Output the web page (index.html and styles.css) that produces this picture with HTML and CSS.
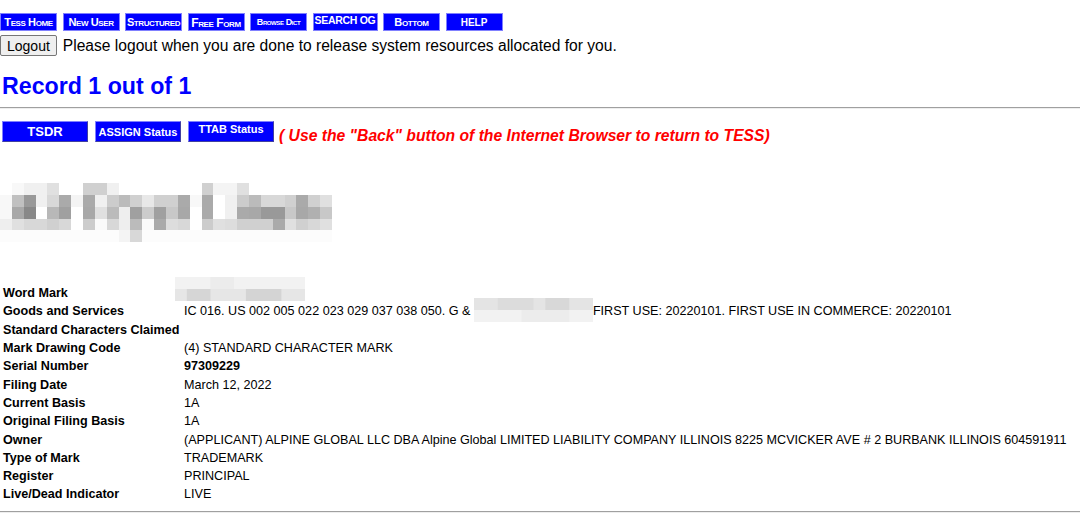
FILE: index.html
```html
<!DOCTYPE html>
<html lang="en">
<head>
    <meta charset="UTF-8">
    <title>Trademark Electronic Search System (TESS)</title>
    <link rel="stylesheet" href="styles.css">
</head>
<body>
    <div class="nav">
        <a class="navbtn" href="#">Tess Home</a>
        <a class="navbtn" href="#">New User</a>
        <a class="navbtn" href="#">Structured</a>
        <a class="navbtn big" href="#">Free Form</a>
        <a class="navbtn small" href="#">Browse Dict</a>
        <a class="navbtn plain wide" href="#">SEARCH OG</a>
        <a class="navbtn" href="#">Bottom</a>
        <a class="navbtn plain" href="#">HELP</a>
    </div>
    <div class="logout-row">
        <button class="logout">Logout</button>
        <span>Please logout when you are done to release system resources allocated for you.</span>
    </div>

    <h1 class="record">Record 1 out of 1</h1>
    <hr>

    <div class="status-row">
        <a class="statbtn tsdr" href="#">TSDR</a>
        <a class="statbtn" href="#">ASSIGN Status</a>
        <a class="statbtn ttab" href="#">TTAB Status</a>
        <span class="back-note">( Use the "Back" button of the Internet Browser to return to TESS)</span>
    </div>

    <div class="mark-image">
        <svg width="332" height="64" viewBox="0 0 28 5.4" preserveAspectRatio="none" shape-rendering="crispEdges">
            <g id="r0">
                <rect x="1" y="0" width="1" height="1" fill="#f8f8f8"/>
                <rect x="2" y="0" width="2" height="1" fill="#f0f0f0"/>
                <rect x="4" y="0" width="1" height="1" fill="#e0e0e0"/>
                <rect x="7" y="0" width="2" height="1" fill="#d0d0d0"/>
                <rect x="9" y="0" width="1" height="1" fill="#f0f0f0"/>
                <rect x="17" y="0" width="1" height="1" fill="#d0d0d0"/>
                <rect x="18" y="0" width="2" height="1" fill="#f4f4f4"/>
                <rect x="20" y="0" width="1" height="1" fill="#e0e0e0"/>
            </g>
            <g id="r1">
                <rect x="0" y="1" width="1" height="1" fill="#f8f8f8"/>
                <rect x="1" y="1" width="1" height="1" fill="#c0c0c0"/>
                <rect x="2" y="1" width="1" height="1" fill="#999999"/>
                <rect x="3" y="1" width="1" height="1" fill="#f0f0f0"/>
                <rect x="4" y="1" width="1" height="1" fill="#d8d8d8"/>
                <rect x="5" y="1" width="1" height="1" fill="#aaaaaa"/>
                <rect x="6" y="1" width="1" height="1" fill="#f4f4f4"/>
                <rect x="7" y="1" width="1" height="1" fill="#aaaaaa"/>
                <rect x="8" y="1" width="1" height="1" fill="#f0f0f0"/>
                <rect x="9" y="1" width="1" height="1" fill="#cccccc"/>
                <rect x="10" y="1" width="1" height="1" fill="#bbbbbb"/>
                <rect x="11" y="1" width="1" height="1" fill="#d0d0d0"/>
                <rect x="12" y="1" width="1" height="1" fill="#e8e8e8"/>
                <rect x="13" y="1" width="2" height="1" fill="#d0d0d0"/>
                <rect x="15" y="1" width="1" height="1" fill="#aaaaaa"/>
                <rect x="16" y="1" width="1" height="1" fill="#f8f8f8"/>
                <rect x="17" y="1" width="1" height="1" fill="#aaaaaa"/>
                <rect x="19" y="1" width="1" height="1" fill="#f0f0f0"/>
                <rect x="20" y="1" width="1" height="1" fill="#cccccc"/>
                <rect x="21" y="1" width="1" height="1" fill="#bbbbbb"/>
                <rect x="22" y="1" width="2" height="1" fill="#d8d8d8"/>
                <rect x="24" y="1" width="1" height="1" fill="#d0d0d0"/>
                <rect x="25" y="1" width="1" height="1" fill="#aaaaaa"/>
                <rect x="26" y="1" width="1" height="1" fill="#d0d0d0"/>
                <rect x="27" y="1" width="1" height="1" fill="#e0e0e0"/>
            </g>
            <g id="r2">
                <rect x="0" y="2" width="1" height="1" fill="#f8f8f8"/>
                <rect x="1" y="2" width="1" height="1" fill="#a8a8a8"/>
                <rect x="2" y="2" width="1" height="1" fill="#888888"/>
                <rect x="4" y="2" width="1" height="1" fill="#b8b8b8"/>
                <rect x="5" y="2" width="1" height="1" fill="#a0a0a0"/>
                <rect x="7" y="2" width="1" height="1" fill="#a8a8a8"/>
                <rect x="8" y="2" width="1" height="1" fill="#e0e0e0"/>
                <rect x="9" y="2" width="1" height="1" fill="#bbbbbb"/>
                <rect x="10" y="2" width="1" height="1" fill="#eeeeee"/>
                <rect x="11" y="2" width="1" height="1" fill="#a0a0a0"/>
                <rect x="12" y="2" width="1" height="1" fill="#cccccc"/>
                <rect x="13" y="2" width="1" height="1" fill="#a0a0a0"/>
                <rect x="14" y="2" width="1" height="1" fill="#c8c8c8"/>
                <rect x="15" y="2" width="1" height="1" fill="#a8a8a8"/>
                <rect x="17" y="2" width="1" height="1" fill="#aaaaaa"/>
                <rect x="19" y="2" width="1" height="1" fill="#f0f0f0"/>
                <rect x="20" y="2" width="1" height="1" fill="#aaaaaa"/>
                <rect x="21" y="2" width="1" height="1" fill="#a8a8a8"/>
                <rect x="22" y="2" width="2" height="1" fill="#999999"/>
                <rect x="24" y="2" width="1" height="1" fill="#c8c8c8"/>
                <rect x="25" y="2" width="1" height="1" fill="#a8a8a8"/>
                <rect x="26" y="2" width="1" height="1" fill="#b0b0b0"/>
                <rect x="27" y="2" width="1" height="1" fill="#c8c8c8"/>
            </g>
            <g id="r3">
                <rect x="0" y="3" width="1" height="1" fill="#eeeeee"/>
                <rect x="1" y="3" width="1" height="1" fill="#e0e0e0"/>
                <rect x="2" y="3" width="2" height="1" fill="#d8d8d8"/>
                <rect x="4" y="3" width="1" height="1" fill="#d0d0d0"/>
                <rect x="5" y="3" width="1" height="1" fill="#d8d8d8"/>
                <rect x="7" y="3" width="1" height="1" fill="#cccccc"/>
                <rect x="8" y="3" width="1" height="1" fill="#fafafa"/>
                <rect x="9" y="3" width="1" height="1" fill="#d8d8d8"/>
                <rect x="10" y="3" width="1" height="1" fill="#eeeeee"/>
                <rect x="11" y="3" width="1" height="1" fill="#bbbbbb"/>
                <rect x="12" y="3" width="1" height="1" fill="#fafafa"/>
                <rect x="13" y="3" width="1" height="1" fill="#aaaaaa"/>
                <rect x="14" y="3" width="1" height="1" fill="#dddddd"/>
                <rect x="15" y="3" width="1" height="1" fill="#d8d8d8"/>
                <rect x="17" y="3" width="1" height="1" fill="#cccccc"/>
                <rect x="18" y="3" width="1" height="1" fill="#e0e0e0"/>
                <rect x="19" y="3" width="1" height="1" fill="#dddddd"/>
                <rect x="20" y="3" width="3" height="1" fill="#d0d0d0"/>
                <rect x="23" y="3" width="1" height="1" fill="#aaaaaa"/>
                <rect x="24" y="3" width="1" height="1" fill="#e0e0e0"/>
                <rect x="25" y="3" width="1" height="1" fill="#d0d0d0"/>
                <rect x="26" y="3" width="1" height="1" fill="#d8d8d8"/>
                <rect x="27" y="3" width="1" height="1" fill="#e0e0e0"/>
            </g>
            <g id="r4">
                <rect x="0" y="4" width="28" height="1" fill="#fcfcfc"/>
                <rect x="10" y="4" width="1" height="1" fill="#f4f4f4"/>
                <rect x="11" y="4" width="1" height="1" fill="#d8d8d8"/>
            </g>
        </svg>
    </div>

    <table class="details">
        <tr>
            <td class="label">Word Mark</td>
            <td>
                <svg class="smudge word" width="130" height="24" viewBox="0 0 11 2" preserveAspectRatio="none">
                    <rect x="0" y="0" width="11" height="1" fill="#f2f2f2"/>
                    <rect x="3" y="0" width="2" height="1" fill="#ececec"/>
                    <rect x="0" y="1" width="11" height="1" fill="#e6e6e6"/>
                    <rect x="1" y="1" width="2" height="1" fill="#d6d6d6"/>
                    <rect x="6" y="1" width="3" height="1" fill="#d4d4d4"/>
                </svg>
            </td>
        </tr>
        <tr>
            <td class="label">Goods and Services</td>
            <td>IC 016. US 002 005 022 023 029 037 038 050. G &amp; <svg class="smudge goods" width="119" height="24" viewBox="0 0 10 2" preserveAspectRatio="none">
                    <rect x="0" y="0" width="10" height="1" fill="#e4e4e4"/>
                    <rect x="2" y="0" width="3" height="1" fill="#dcdcdc"/>
                    <rect x="6" y="0" width="2" height="1" fill="#d8d8d8"/>
                    <rect x="0" y="1" width="10" height="1" fill="#f2f2f2"/>
                    <rect x="4" y="1" width="4" height="1" fill="#ececec"/>
                </svg>FIRST USE: 20220101. FIRST USE IN COMMERCE: 20220101</td>
        </tr>
        <tr>
            <td class="label">Standard Characters Claimed</td>
            <td></td>
        </tr>
        <tr>
            <td class="label">Mark Drawing Code</td>
            <td>(4) STANDARD CHARACTER MARK</td>
        </tr>
        <tr>
            <td class="label">Serial Number</td>
            <td><b>97309229</b></td>
        </tr>
        <tr>
            <td class="label">Filing Date</td>
            <td>March 12, 2022</td>
        </tr>
        <tr>
            <td class="label">Current Basis</td>
            <td>1A</td>
        </tr>
        <tr>
            <td class="label">Original Filing Basis</td>
            <td>1A</td>
        </tr>
        <tr>
            <td class="label">Owner</td>
            <td>(APPLICANT) ALPINE GLOBAL LLC DBA Alpine Global LIMITED LIABILITY COMPANY ILLINOIS 8225 MCVICKER AVE # 2 BURBANK ILLINOIS 604591911</td>
        </tr>
        <tr>
            <td class="label">Type of Mark</td>
            <td>TRADEMARK</td>
        </tr>
        <tr>
            <td class="label">Register</td>
            <td>PRINCIPAL</td>
        </tr>
        <tr>
            <td class="label">Live/Dead Indicator</td>
            <td>LIVE</td>
        </tr>
    </table>
    <hr class="bottom-rule">
</body>
</html>
```

FILE: styles.css
```css
/* General Styling */
body {
    font-family: 'Liberation Sans', Arial, sans-serif;
    margin: 0;
    padding: 13px 0 0 0;
    background: #ffffff;
    color: #000000;
}
hr {
    margin: 7px 0 0 0;
    border: none;
    border-top: 1px solid #a0a0a0;
    border-bottom: 1px solid #eeeeee;
}

/* Top navigation images */
.nav {
    display: flex;
    gap: 5.5px;
}
.navbtn {
    display: flex;
    align-items: center;
    justify-content: center;
    width: 55px;
    height: 16px;
    background: #0000ff;
    border: 1px solid #8080ff;
    color: #ffffff;
    font-weight: bold;
    font-size: 11px;
    font-variant: small-caps;
    text-decoration: none;
    white-space: nowrap;
    letter-spacing: -0.4px;
    overflow: hidden;
}
.navbtn.big {
    font-size: 12px;
    align-items: flex-end;
}
.navbtn.small {
    font-size: 9px;
}
.navbtn.plain {
    font-variant: normal;
    font-size: 10px;
    letter-spacing: 0;
}
.navbtn.wide {
    width: 63px;
    font-size: 10.5px;
    letter-spacing: -0.3px;
    align-items: flex-start;
}

/* Logout */
.logout-row {
    display: flex;
    align-items: center;
    gap: 6px;
    margin-top: 4px;
    font-size: 15.6px;
}
.logout {
    font-family: 'Liberation Sans', Arial, sans-serif;
    font-size: 14px;
    padding: 1px 6px;
    height: 21px;
    background: #efefef;
    border: 1px solid #767676;
    border-radius: 2px;
    color: #000000;
}

/* Heading */
.record {
    color: #0000ff;
    font-size: 23.2px;
    font-weight: bold;
    margin: 17px 0 0 2px;
}

/* Status buttons */
.status-row {
    display: flex;
    align-items: flex-start;
    gap: 7px;
    margin: 12px 0 0 2px;
}
.statbtn {
    display: flex;
    align-items: center;
    justify-content: center;
    width: 84px;
    height: 19px;
    background: #0000ff;
    border: 1px solid #8080ff;
    border-right-color: #4040a0;
    border-bottom-color: #4040a0;
    color: #ffffff;
    font-size: 11px;
    font-weight: bold;
    text-decoration: none;
}
.statbtn.tsdr {
    font-size: 13px;
}
.statbtn.ttab {
    align-items: flex-start;
    padding-top: 1px;
    height: 18px;
}
.back-note {
    color: #ff0000;
    font-size: 15.7px;
    font-weight: bold;
    font-style: italic;
    margin: 6px 0 0 -2px;
}

/* Mark image */
.mark-image {
    margin-top: 38px;
    height: 64px;
}
.mark-image svg {
    display: block;
}

/* Details table */
.details {
    border-collapse: collapse;
    margin-top: 37px;
    font-size: 12.6px;
}
.details td {
    padding: 0 0 0 3px;
    height: 18.3px;
    vertical-align: middle;
    white-space: nowrap;
}
.details td.label {
    font-weight: bold;
    width: 178px;
}
.smudge {
    display: inline-block;
    vertical-align: middle;
    margin: -12px 0 -8px 0;
}
.smudge.word {
    margin: -17px 0 -7px -9px;
}
.bottom-rule {
    margin-top: 7px;
}
```
